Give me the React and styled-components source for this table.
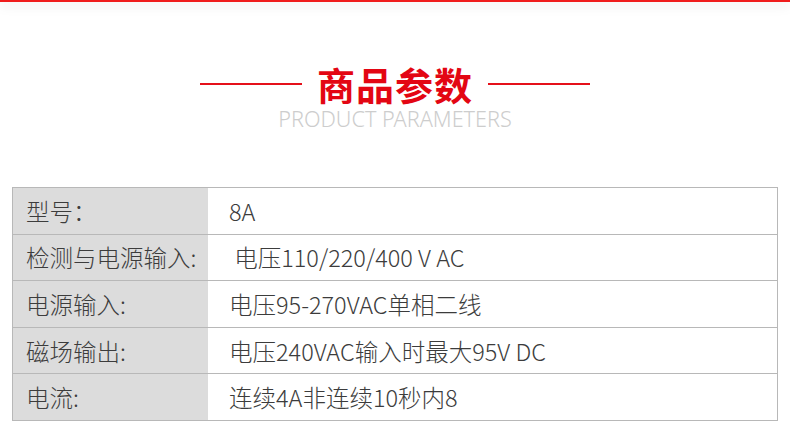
import React from "react";
import styled, { createGlobalStyle } from "styled-components";

const Global = createGlobalStyle`
  html, body { margin: 0; padding: 0; background: #fff; }
  body { width: 790px; height: 433px; overflow: hidden; font-family: "Noto Sans CJK SC", "Noto Sans", sans-serif; }
`;

const Page = styled.div`
  width: 790px;
  height: 433px;
  display: flex;
  flex-direction: column;
  background: #fff;
`;

const TopBar = styled.div`
  height: 2px;
  background: #f01d1d;
  box-shadow: 0 3px 12px rgba(0, 0, 0, 0.18);
`;

const Heading = styled.header`
  margin-top: 62px;
  display: flex;
  flex-direction: column;
  align-items: center;
`;

const TitleRow = styled.div`
  display: flex;
  align-items: center;
  gap: 15px;
`;

const Rule = styled.span`
  width: 102px;
  height: 1.5px;
  background: #e5101a;
`;

const Title = styled.h1`
  margin: 0;
  font-family: "Noto Sans CJK SC", sans-serif;
  font-weight: 700;
  font-size: 38px;
  line-height: 40px;
  color: #e30613;
  letter-spacing: 1px;
`;

const Subtitle = styled.div`
  margin-top: 3px;
  font-family: "Noto Sans", "Open Sans", sans-serif;
  font-weight: 300;
  font-size: 21.6px;
  line-height: 24px;
  color: #cdcdcd;
`;

const Table = styled.div`
  margin: 56px 0 0 12px;
  width: 764px;
  border: 1px solid #b8b8b8;
  display: flex;
  flex-direction: column;
`;

const Row = styled.div`
  display: grid;
  grid-template-columns: 195px 1fr;
  height: 45.6px;
  border-top: ${(p) => (p.$first ? "none" : "1px solid #b8b8b8")};
`;

const Cell = styled.div`
  display: flex;
  align-items: center;
  padding-left: ${(p) => (p.$label ? "13px" : "21px")};
  background: ${(p) => (p.$label ? "#dcdcdc" : "#fff")};
  font-family: "Noto Sans CJK SC", sans-serif;
  font-weight: 300;
  font-size: 23.5px;
  color: #3c3c3c;
  white-space: nowrap;
`;

const rows = [
  ["型号：", "8A"],
  ["检测与电源输入:", "\u00a0电压110/220/400 V AC"],
  ["电源输入:", "电压95-270VAC单相二线"],
  ["磁场输出:", "电压240VAC输入时最大95V DC"],
  ["电流:", "连续4A非连续10秒内8"],
];

export default function App() {
  return (
    <Page>
      <Global />
      <TopBar />
      <Heading>
        <TitleRow>
          <Rule />
          <Title>商品参数</Title>
          <Rule />
        </TitleRow>
        <Subtitle>PRODUCT PARAMETERS</Subtitle>
      </Heading>
      <Table>
        {rows.map(([k, v], i) => (
          <Row key={k} $first={i === 0}>
            <Cell $label>{k}</Cell>
            <Cell>{v}</Cell>
          </Row>
        ))}
      </Table>
    </Page>
  );
}
